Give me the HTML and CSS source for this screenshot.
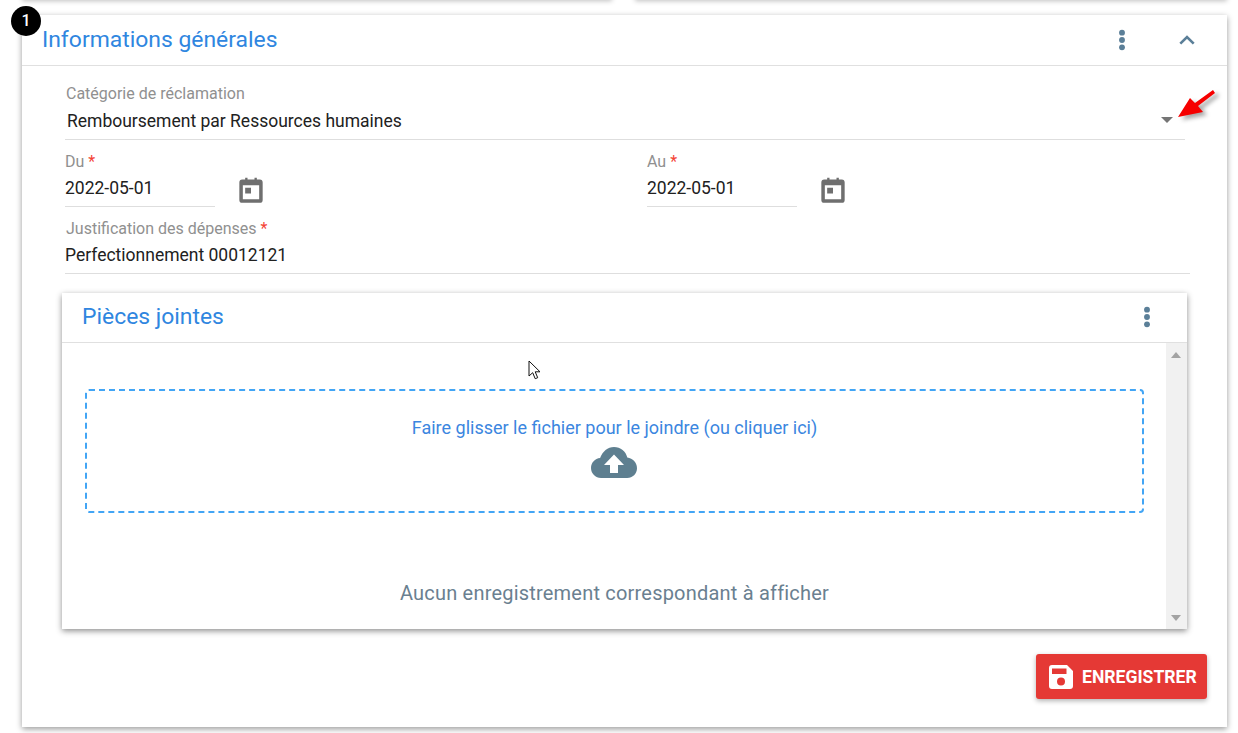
FILE: index.html
```html
<!DOCTYPE html>
<html lang="fr">
<head>
<meta charset="utf-8">
<title>Informations générales</title>
<link rel="stylesheet" href="styles.css">
</head>
<body>
<div class="top-strip"><div class="stub stub-left"></div><div class="stub stub-right"></div></div>
<section class="card">
  <span class="badge">1</span>
  <header class="card-head">
    <h2 class="title">Informations générales</h2>
    <svg class="dots" viewBox="0 0 8 24"><circle cx="4" cy="4" r="3.2"/><circle cx="4" cy="12" r="3.2"/><circle cx="4" cy="20" r="3.2"/></svg>
    <svg class="chev" viewBox="0 0 16 10"><path d="M1.3 8.7 8 2l6.700 6.700"/></svg>
  </header>
  <div class="card-body">
    <div class="field select">
      <label class="label">Catégorie de réclamation</label>
      <div class="value value-select"><span>Remboursement par Ressources humaines</span><i class="caret"></i></div>
    </div>
    <div class="dates">
      <div class="date-col">
        <div class="field date">
          <label class="label">Du <b>*</b></label>
          <div class="value">2022-05-01</div>
        </div>
        <svg class="cal" viewBox="0 0 24 24"><path d="M7 1.500h2V3h6V1.500h2V3h2.500A2.500 2.500 0 0 1 22 5.500v15a2.500 2.500 0 0 1-2.500 2.500h-15A2.500 2.500 0 0 1 2 20.500v-15A2.500 2.500 0 0 1 4.500 3H7zM5 8v12h14V8zm2 2h5v5H7z" fill-rule="evenodd"/></svg>
      </div>
      <div class="date-col">
        <div class="field date">
          <label class="label">Au <b>*</b></label>
          <div class="value">2022-05-01</div>
        </div>
        <svg class="cal" viewBox="0 0 24 24"><path d="M7 1.500h2V3h6V1.500h2V3h2.500A2.500 2.500 0 0 1 22 5.500v15a2.500 2.500 0 0 1-2.500 2.500h-15A2.500 2.500 0 0 1 2 20.500v-15A2.500 2.500 0 0 1 4.500 3H7zM5 8v12h14V8zm2 2h5v5H7z" fill-rule="evenodd"/></svg>
      </div>
    </div>
    <div class="field just">
      <label class="label">Justification des dépenses <b>*</b></label>
      <div class="value">Perfectionnement 00012121</div>
    </div>
    <section class="inner">
      <header class="inner-head">
        <h3 class="title">Pièces jointes</h3>
        <svg class="dots" viewBox="0 0 8 24"><circle cx="4" cy="4" r="3.2"/><circle cx="4" cy="12" r="3.2"/><circle cx="4" cy="20" r="3.2"/></svg>
      </header>
      <div class="inner-body">
        <div class="inner-main">
          <div class="drop">
            <span class="drop-text">Faire glisser le fichier pour le joindre (ou cliquer ici)</span>
            <svg class="cloud" viewBox="0 0 46 31"><path d="M23 0c6.500 0 12 4.500 13.300 10.600C41.800 11.200 46 15.800 46 21.200 46 26.600 41.600 31 36.200 31H10C4.500 31 0 26.500 0 21c0-5.200 4-9.400 9.100-9.900C11.500 4.600 16.700 0 23 0z"/><path class="arrow" d="M23 7.500 33 18h-6v8h-8v-8h-6z"/></svg>
          </div>
          <p class="empty">Aucun enregistrement correspondant à afficher</p>
        </div>
        <div class="scroll"><i class="up"></i><i class="down"></i></div>
      </div>
    </section>
    <div class="actions">
      <button class="save" type="button">
        <svg viewBox="0 0 24 24"><path d="M3 0h15l6 6v15a3 3 0 0 1-3 3H3a3 3 0 0 1-3-3V3a3 3 0 0 1 3-3zm0 3.500V9h14.500V3.500zM12 12.500a4 4 0 1 0 0 8 4 4 0 0 0 0-8z" fill-rule="evenodd"/></svg>
        <span>ENREGISTRER</span>
      </button>
    </div>
  </div>
</section>
<svg class="red-arrow" viewBox="0 0 48 38"><path d="M1 29 26 24 21 18 38 5 36 2 18 15 13 10z"/></svg>
<svg class="cursor" viewBox="0 0 14 20"><path d="M1 1v15l3.700-3.300 2.500 6 2.500-1-2.500-5.900H12z"/></svg>
</body>
</html>
```
FILE: styles.css
```css
* { box-sizing: border-box; }
html, body { margin: 0; padding: 0; }
body {
  position: relative;
  width: 1238px;
  height: 733px;
  overflow: hidden;
  background: #fff;
  font-family: Roboto, "Liberation Sans", sans-serif;
  color: #212121;
}
.top-strip { height: 15px; display: flex; gap: 23px; padding-left: 22px; padding-right: 11px; align-items: flex-end; }
.stub { height: 15px; transform: translateY(-15px); background: #fff; box-shadow: 0 1px 5px rgba(0,0,0,.25); }
.stub-left { width: 590px; }
.stub-right { flex: 1; }
.card {
  position: relative;
  width: 1205px;
  height: 712px;
  margin-left: 22px;
  background: #fff;
  box-shadow: 0 2px 6px rgba(0,0,0,.4);
}
.badge {
  position: absolute;
  left: -11px;
  top: -9px;
  width: 30px;
  height: 30px;
  border-radius: 50%;
  background: #000;
  color: #fff;
  font: 500 16px/30px Roboto, sans-serif;
  text-align: center;
}
.card-head {
  height: 51px;
  display: flex;
  align-items: center;
  padding-left: 20px;
  border-bottom: 1px solid #e0e0e0;
}
.title { margin: 0; flex: 1; font-size: 22.900px; font-weight: 400; color: #2f86e0; line-height: 48px; }
.dots { width: 8px; height: 24px; fill: #5b7f98; }
.card-head .dots { height: 22px; margin-right: 53px; }
.chev { width: 16px; height: 10px; margin-right: 32px; fill: none; stroke: #5b7f98; stroke-width: 2.600; }
.card-body { padding: 0 0 0 40px; }
.field { display: flex; flex-direction: column; }
.label { font-size: 16px; line-height: 20px; color: #909090; }
.label b { color: #f44336; font-weight: 400; }
.value { font-size: 17.500px; line-height: 24px; color: #212121; border-bottom: 1px solid #dedede; }
.select { width: 1120px; margin-left: 3px; padding-top: 18px; }
.select .label { margin-left: 1px; }
.value-select { display: flex; justify-content: space-between; align-items: center; height: 36px; padding: 0 12px 2px 2px; }
.caret { width: 0; height: 0; border: 6.500px solid transparent; border-top: 6.500px solid #757575; border-bottom: 0; margin-top: -2px; }
.dates { display: flex; padding-left: 3px; padding-top: 12px; }
.date-col { flex: none; width: 582px; display: flex; align-items: flex-start; }
.date { width: 150px; }
.date .value { height: 35px; padding-top: 4px; }
.cal { width: 28px; height: 28px; fill: #6f6f6f; margin: 24px 0 0 22px; }
.just { width: 1125px; margin-left: 3px; padding-top: 12px; }
.just .label { margin-left: 1px; }
.just .value { height: 35px; padding-top: 4px; }
.inner {
  width: 1125px;
  height: 336px;
  margin-top: 19px;
  background: #fff;
  box-shadow: 0 2px 6px rgba(0,0,0,.45);
}
.inner-head {
  height: 50px;
  display: flex;
  align-items: center;
  padding: 0 0 2px 20px;
  border-bottom: 1px solid #e0e0e0;
}
.inner-head .dots { height: 22px; margin-right: 36px; }
.inner-body { display: flex; height: 286px; }
.inner-main { flex: 1; display: flex; flex-direction: column; align-items: center; padding: 46px 22px 0 23px; }
.drop {
  width: 1059px;
  height: 124px;
  border: 2px dashed #42a5f5;
  border-radius: 4px;
  display: flex;
  flex-direction: column;
  align-items: center;
  padding-top: 25px;
}
.drop-text { font-size: 18px; line-height: 24px; color: #3b86e0; }
.cloud { width: 46px; height: 31px; margin: 7px 1px 0 0; fill: #5e7f90; }
.cloud .arrow { fill: #fff; }
.empty { margin: 67px 0 0; font-size: 20px; line-height: 26px; color: #6a8090; letter-spacing: .2px; }
.scroll { position: relative; width: 21px; background: #f1f1f1; }
.up, .down { position: absolute; left: 5px; width: 0; height: 0; border: 5px solid transparent; }
.up { top: 9px; border-top: 0; border-bottom: 6px solid #a3a3a3; }
.down { bottom: 8px; border-bottom: 0; border-top: 6px solid #a3a3a3; }
.actions { display: flex; justify-content: flex-end; padding: 25px 20px 0 0; }
.save {
  width: 171px;
  height: 45px;
  display: flex;
  align-items: center;
  gap: 9px;
  padding: 0 0 0 13px;
  border: 0;
  border-radius: 3px;
  background: #e53935;
  color: #fff;
  font: 700 17.600px Roboto, sans-serif;
  box-shadow: 0 2px 5px rgba(0,0,0,.3);
}
.save svg { width: 24px; height: 24px; fill: #fff; flex: none; }
.red-arrow { position: absolute; left: 1177px; top: 88px; width: 48px; height: 38px; fill: #f60000; filter: drop-shadow(4px 3px 2px rgba(0,0,0,.35)); }
.cursor { position: absolute; left: 528px; top: 360px; width: 14px; height: 20px; fill: #fff; stroke: #111; stroke-width: 1; }
```
